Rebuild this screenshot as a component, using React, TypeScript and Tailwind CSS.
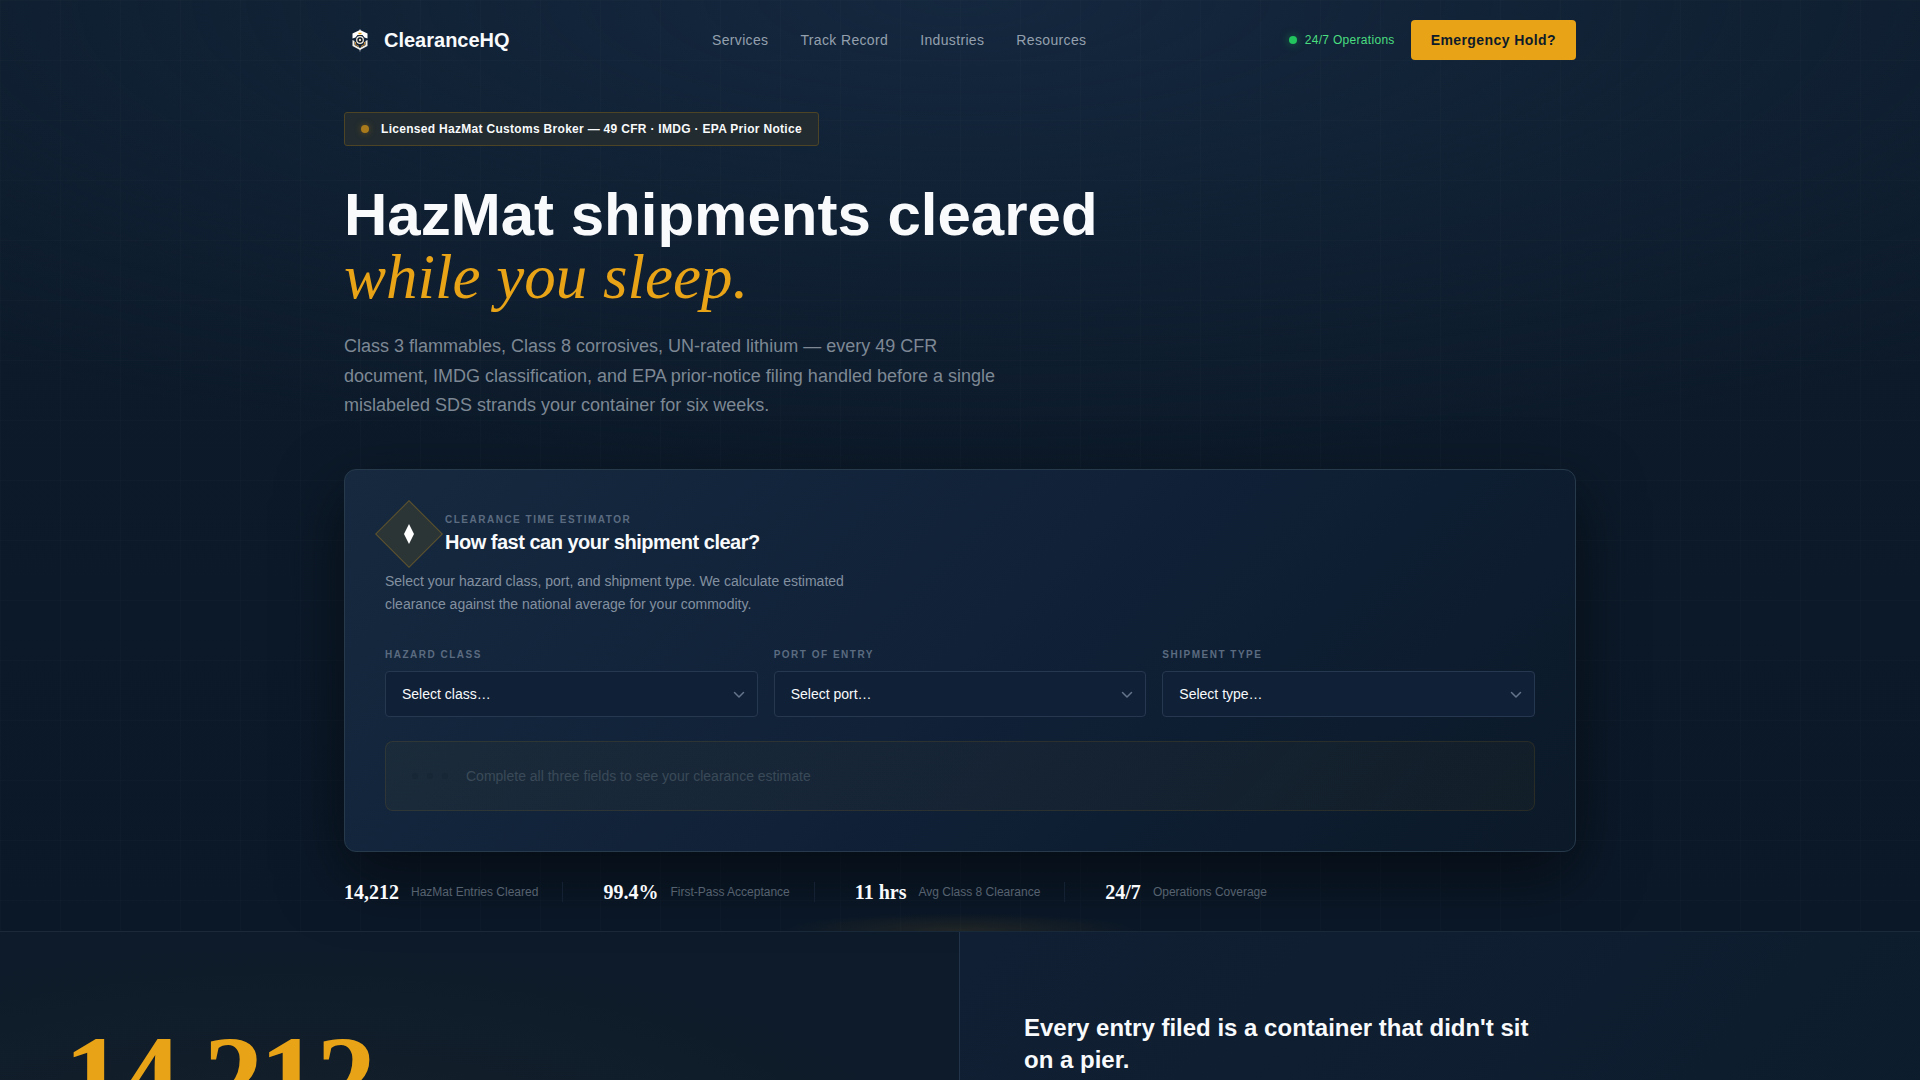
import React from "react";

const navLinks = ["Services", "Track Record", "Industries", "Resources"];

const fields = [
  { id: "hazard-class", label: "Hazard Class", placeholder: "Select class…", options: ["Class 3", "Class 8", "Class 9"] },
  { id: "port-of-entry", label: "Port of Entry", placeholder: "Select port…", options: ["Los Angeles", "Houston", "Newark"] },
  { id: "shipment-type", label: "Shipment Type", placeholder: "Select type…", options: ["FCL", "LCL", "Air"] },
];

const stats = [
  { value: "14,212", label: "HazMat Entries Cleared" },
  { value: "99.4%", label: "First-Pass Acceptance" },
  { value: "11 hrs", label: "Avg Class 8 Clearance" },
  { value: "24/7", label: "Operations Coverage" },
];

function Logo() {
  return (
    <svg viewBox="0 0 32 32" className="h-8 w-8" aria-hidden="true">
      <path d="M16 5v3M16 24v3.500" stroke="#8d98a5" strokeWidth="1" />
      <path d="M16 6 23.500 9.500v5l-3-1-2-2.500h-5l-2 2.500-3 1v-5Z" fill="#fff" />
      <path d="M8.500 16v6l7.500 4 7.500-4v-6l-2 1v4L16 24l-5.500-3v-4Z" fill="#f3f0e8" />
      <path d="M11.500 18v2.500l3.500 2M20.500 18v2.500l-3.500 2" fill="none" stroke="#c98a35" strokeWidth="1" />
      <path d="M14.500 9.500h3" stroke="#e8a317" strokeWidth="1.500" />
      <circle cx="16" cy="16" r="3.300" fill="#101a24" stroke="#f4efe4" strokeWidth="1.200" />
      <circle cx="16" cy="16" r="1.200" fill="#e9ddc8" />
    </svg>
  );
}

function Header() {
  return (
    <header className="mx-auto flex h-20 max-w-7xl items-center justify-between px-6">
      <a href="#" className="flex items-center gap-2 text-xl font-bold text-[#f8fafc]">
        <Logo />
        ClearanceHQ
      </a>
      <nav className="flex gap-8 text-sm tracking-wide text-[#94a0ae]">
        {navLinks.map((l) => (
          <a key={l} href="#">{l}</a>
        ))}
      </nav>
      <div className="flex items-center gap-4">
        <span className="flex items-center gap-2 text-xs tracking-wide text-[#4ade80]">
          <span className="h-2 w-2 rounded-full bg-[#22c55e] shadow-[0_0_8px_#22c55e80]" />
          24/7 Operations
        </span>
        <button className="h-10 rounded bg-[#e8a317] px-5 text-sm font-bold tracking-[0.03em] text-[#0d1b2a]">
          Emergency Hold?
        </button>
      </div>
    </header>
  );
}

function Estimator() {
  return (
    <section className="rounded-xl border border-[#263a4b] bg-[linear-gradient(135deg,#16293f_0%,#102138_50%,#0b1928_100%)] p-10 shadow-[0_24px_64px_rgba(0,0,0,0.5)]">
      <div className="flex items-center gap-3">
        <div className="flex h-12 w-12 rotate-45 items-center justify-center border border-[#5d522f] bg-[#2b3536]">
          <svg viewBox="0 0 10 20" className="h-5 w-2.5 -rotate-45" aria-hidden="true">
            <path d="M5 0 10 10 5 20 0 10Z" fill="#fff" />
          </svg>
        </div>
        <div>
          <p className="text-[10px] leading-4 font-bold tracking-[0.15em] text-[#5b6b80] uppercase">Clearance Time Estimator</p>
          <h2 className="text-xl leading-7 font-bold tracking-tight text-[#f8fafc]">How fast can your shipment clear?</h2>
        </div>
      </div>
      <p className="mt-3 max-w-[480px] text-sm leading-[23px] text-[#8390a0]">
        Select your hazard class, port, and shipment type. We calculate estimated clearance against the national average for your commodity.
      </p>
      <div className="mt-8 grid grid-cols-3 gap-4">
        {fields.map((f) => (
          <div key={f.id}>
            <label htmlFor={f.id} className="block text-[10px] leading-[13px] font-bold tracking-[0.15em] text-[#5b6b80] uppercase">
              {f.label}
            </label>
            <div className="relative mt-2.5">
              <select
                id={f.id}
                className="h-[46px] w-full appearance-none rounded border border-[#263850] bg-[#102036] px-4 text-sm text-[#f8fafc]"
              >
                <option>{f.placeholder}</option>
                {f.options.map((o) => (
                  <option key={o}>{o}</option>
                ))}
              </select>
              <svg viewBox="0 0 12 8" className="pointer-events-none absolute top-5 right-[13px] h-2 w-3" aria-hidden="true">
                <path d="m1.500 1.500 4.500 4.500 4.500-4.500" fill="none" stroke="#64748b" strokeWidth="1.500" strokeLinecap="round" strokeLinejoin="round" />
              </svg>
            </div>
          </div>
        ))}
      </div>
      <div className="mt-6 flex h-[70px] items-center gap-4 rounded-lg border border-[#e8a317]/10 bg-[linear-gradient(135deg,rgba(200,180,23,0.04),rgba(232,163,23,0.03))] px-6">
        <div className="flex w-10 justify-between px-0.5">
          <span className="h-1.5 w-1.5 rounded-full bg-[#172735]" />
          <span className="h-1.5 w-1.5 rounded-full bg-[#172735]" />
          <span className="h-1.5 w-1.5 rounded-full bg-[#172735]" />
        </div>
        <p className="text-sm text-[#3a4a58]">Complete all three fields to see your clearance estimate</p>
      </div>
    </section>
  );
}

function Stats() {
  return (
    <dl className="flex items-center pt-7 pb-[27px]">
      {stats.map((s, i) => (
        <div key={s.label} className="flex items-center">
          {i > 0 && <div className="mr-10 ml-6 h-5 w-px bg-[#132132]" />}
          <dt className="order-3 ml-3 text-xs text-[#56626f]">{s.label}</dt>
          <dd className="order-2 font-['Liberation_Serif',serif] text-xl leading-6 font-bold text-[#f8fafc]">{s.value}</dd>
        </div>
      ))}
    </dl>
  );
}

export default function App() {
  return (
    <div className="min-h-screen overflow-x-hidden bg-[#0d1b2a] font-['Liberation_Sans',Arial,sans-serif] text-[#f8fafc]">
      <div className="border-b border-[#1a2a3a] bg-[linear-gradient(rgba(255,255,255,0.01)_1px,transparent_1px),linear-gradient(90deg,rgba(255,255,255,0.01)_1px,transparent_1px),radial-gradient(ellipse_80%_50%_at_50%_0%,#14273e,transparent),linear-gradient(180deg,#0d1b2a,#0b1828)] bg-[size:60px_60px,60px_60px,100%_100%,100%_100%]">
        <Header />
        <main className="mx-auto max-w-7xl px-6 pt-8">
          <p className="inline-flex h-[34px] items-center gap-3 rounded-[3px] border border-[#4d4425] bg-[#222b2f] px-4 text-xs font-bold tracking-wide">
            <span className="h-2 w-2 rounded-full bg-[#a87a1b] shadow-[0_0_6px_#a87a1b80]" />
            Licensed HazMat Customs Broker — 49 CFR · IMDG · EPA Prior Notice
          </p>
          <h1 className="mt-[38px] text-[60px] leading-[62px] font-bold">
            HazMat shipments cleared
            <em className="block font-['Liberation_Serif',serif] text-[63px] font-normal text-[#e8a317]">while you sleep.</em>
          </h1>
          <p className="mt-6 mb-12 max-w-[660px] text-lg leading-[1.65] text-[#7d8894]">
            Class 3 flammables, Class 8 corrosives, UN-rated lithium — every 49 CFR document, IMDG classification, and EPA prior-notice filing handled before a single mislabeled SDS strands your container for six weeks.
          </p>
          <Estimator />
          <div className="bg-[radial-gradient(ellipse_180px_18px_at_50%_100%,rgba(232,163,23,0.1),transparent)]">
            <Stats />
          </div>
        </main>
      </div>
      <section className="grid grid-cols-2">
        <div className="border-r border-[#22344a] bg-[radial-gradient(ellipse_at_30%_80%,rgba(232,163,23,0.035),transparent_70%)] px-16 pt-[87px] pb-20">
          <p className="font-['Liberation_Serif',serif] text-[120px] leading-none font-bold tracking-[-0.03em] text-[#e8a317]">14,212</p>
        </div>
        <div className="bg-[linear-gradient(135deg,#101f33,#0d1c2c)] px-16 py-20">
          <h2 className="max-w-[520px] text-2xl leading-8 font-bold">Every entry filed is a container that didn't sit on a pier.</h2>
        </div>
      </section>
    </div>
  );
}
